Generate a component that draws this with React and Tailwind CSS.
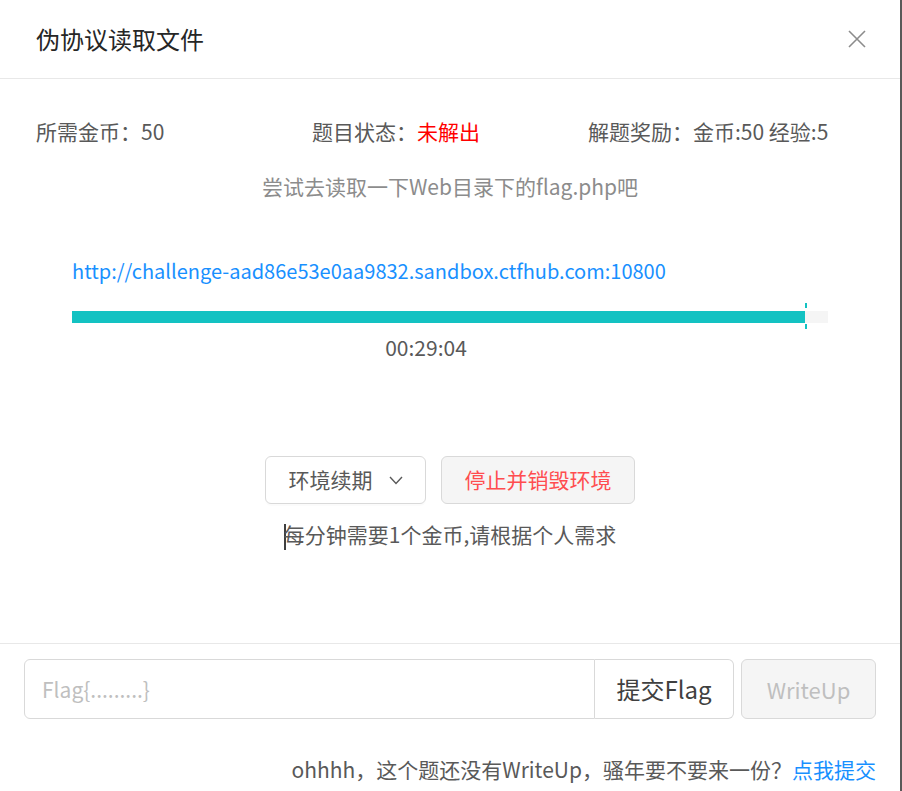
import React from 'react'

const font = "font-['Noto_Sans_CJK_SC','Noto_Sans',sans-serif]"

export default function App() {
  const percent = 0.9696
  return (
    <div className={`min-h-[791px] w-[902px] bg-[#595959] ${font}`}>
      <div className="w-[900px] min-h-[791px] bg-white">
        {/* 头部 */}
        <div className="h-[79px] border-b border-[#e8e8e8] flex items-center justify-between pl-[36px] pr-[34px]">
          <h2 className="text-[24px] text-[#262626] leading-none">伪协议读取文件</h2>
          <svg width="18" height="18" viewBox="0 0 18 18" className="text-[#8c8c8c]">
            <path d="M1 1 L17 17 M17 1 L1 17" stroke="currentColor" strokeWidth="1.6" fill="none" />
          </svg>
        </div>

        {/* 内容 */}
        <div className="px-[36px] h-[564px] flex flex-col">
          <div className="grid grid-cols-3 text-[21px] text-[#595959] mt-[38px] leading-[28px]">
            <div>所需金币：50</div>
            <div>题目状态：<span className="text-[#ff0000]">未解出</span></div>
            <div>解题奖励：金币:50 经验:5</div>
          </div>
          <p className="text-center text-[21px] text-[#8c8c8c] mt-[27px] leading-[28px]">
            尝试去读取一下Web目录下的flag.php吧
          </p>

          <div className="px-[36px] mt-[57px]">
            <a className="text-[20px] text-[#1890ff] leading-[28px] block">
              http://challenge-aad86e53e0aa9832.sandbox.ctfhub.com:10800
            </a>
            <div className="relative mt-[26px] h-[12px] bg-[#f5f5f5]">
              <div className="h-full bg-[#13c2c2]" style={{ width: `${percent * 100}%` }} />
              <div className="absolute left-[733px] top-[-8px] w-[2px] h-[5px] bg-[#13c2c2]" />
              <div className="absolute left-[733px] top-[13px] w-[2px] h-[5px] bg-[#13c2c2]" />
            </div>
            <div className="pr-[48px] text-center text-[21px] text-[#595959] mt-[10px] leading-[28px]">
              00:29:04
            </div>
          </div>

          <div className="flex justify-center gap-[15px] mt-[95px]">
            <button className="h-[48px] w-[161px] border border-[#d9d9d9] rounded-[6px] bg-white text-[21px] text-[#595959] flex items-center justify-center gap-[16px] shadow-[0_2px_0_rgba(0,0,0,0.015)]">
              环境续期
              <svg width="14" height="9" viewBox="0 0 14 9">
                <path d="M1 1 L7 7.5 L13 1" stroke="#595959" strokeWidth="1.4" fill="none" />
              </svg>
            </button>
            <button className="h-[48px] w-[194px] border border-[#d9d9d9] rounded-[6px] bg-[#f5f5f5] text-[21px] text-[#ff4d4f]">
              停止并销毁环境
            </button>
          </div>
          <p className="text-center text-[21px] text-[#595959] mt-[16px] leading-[28px]">
            <span className="inline-block w-[2px] h-[26px] bg-[#404040] align-middle -mr-[2px]" />
            每分钟需要1个金币,请根据个人需求
          </p>
        </div>

        {/* 底部 */}
        <div className="border-t border-[#e8e8e8] px-[24px] pt-[15px]">
          <div className="flex">
            <div className="flex flex-1">
              <input
                placeholder="Flag{.........}"
                className="h-[60px] flex-1 border border-[#d9d9d9] rounded-l-[6px] px-[17px] text-[21px] outline-none placeholder:text-[#bfbfbf]"
              />
              <button className="h-[60px] w-[139px] border border-l-0 border-[#d9d9d9] rounded-r-[6px] bg-white text-[24px] text-[#404040]">
                提交Flag
              </button>
            </div>
            <button className="ml-[7px] h-[60px] w-[135px] border border-[#d9d9d9] rounded-[6px] bg-[#f5f5f5] text-[22px] text-[#bfbfbf]">
              WriteUp
            </button>
          </div>
          <p className="text-right text-[21px] text-[#595959] mt-[36px] leading-[28px]">
            ohhhh，这个题还没有WriteUp，骚年要不要来一份？<a className="text-[#1890ff]">点我提交</a>
          </p>
        </div>
      </div>
    </div>
  )
}
